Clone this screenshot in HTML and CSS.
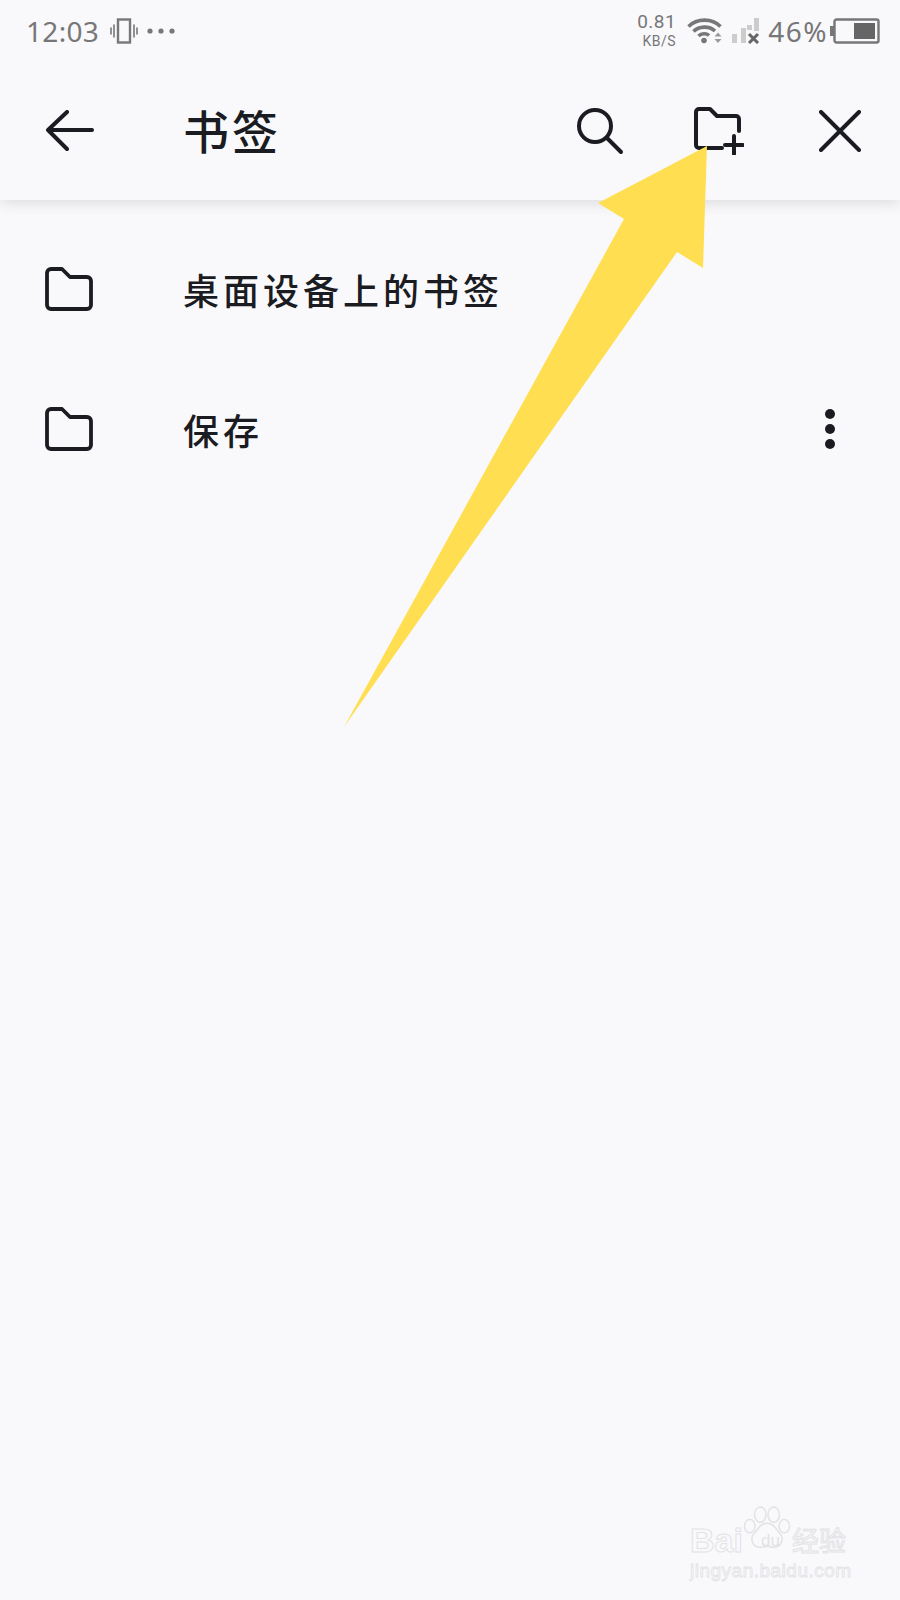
FILE: index.html
```html
<!DOCTYPE html>
<html lang="zh-CN">
<head>
    <meta charset="UTF-8">
    <meta name="viewport" content="width=device-width, initial-scale=1.0">
    <title>书签</title>
    <link rel="stylesheet" href="styles.css">
</head>
<body>
    <div class="screen">
        <div class="status-bar">
            <span class="clock">12:03</span>
            <svg class="vibrate-icon" width="28" height="26" viewBox="0 0 28 26" fill="none" stroke="#777" stroke-linecap="round">
                <rect x="8" y="1.5" width="12" height="23" stroke-width="2.4"/>
                <path d="M4 7v12M1 10v6M24 7v12M27 10v6" stroke-width="1.6"/>
            </svg>
            <svg class="more-icon" width="28" height="6" viewBox="0 0 28 6" fill="#777">
                <circle cx="3" cy="3" r="2.6"/><circle cx="14" cy="3" r="2.6"/><circle cx="25" cy="3" r="2.6"/>
            </svg>
            <div class="status-right">
                <div class="speed">
                    <span class="speed-value">0.81</span>
                    <span class="speed-unit">KB/S</span>
                </div>
                <svg class="wifi-icon" width="36" height="26" viewBox="0 0 36 26" fill="none" stroke="#777" stroke-width="3.6">
                    <path d="M1.5 8.5C10 0 25 0 33.500 8.500"/>
                    <path d="M6.500 13.500C12 8 22 7.500 28 13"/>
                    <path d="M11.500 18C14.500 15 19.500 15 22 17.500"/>
                    <circle cx="17" cy="22.500" r="2.800" fill="#777" stroke="none"/>
                    <path d="M31 14.500l3.500 4h-7zM31 25l3.500-4h-7z" fill="#999" stroke="none"/>
                </svg>
                <svg class="signal-icon" width="28" height="26" viewBox="0 0 28 26">
                    <rect x="0" y="16" width="5" height="9" fill="#ccc"/>
                    <rect x="9" y="10" width="5" height="15" fill="#ccc"/>
                    <rect x="15" y="7" width="5" height="5" fill="#ccc"/>
                    <rect x="22" y="0" width="5" height="13" fill="#ccc"/>
                    <path d="M17 16l9 9M26 16l-9 9" stroke="#666" stroke-width="3"/>
                </svg>
                <span class="battery-text">46%</span>
                <svg class="battery-icon" width="50" height="26" viewBox="0 0 50 26">
                    <rect x="0" y="8" width="4" height="10" fill="#777"/>
                    <rect x="4.500" y="1.500" width="44" height="23" rx="2" fill="none" stroke="#777" stroke-width="2.400"/>
                    <rect x="24" y="5" width="21" height="16" fill="#666"/>
                </svg>
            </div>
        </div>

        <div class="toolbar">
            <svg class="back-icon" width="48" height="42" viewBox="0 0 48 42" fill="none" stroke="#1b1b22" stroke-width="4" stroke-linecap="round" stroke-linejoin="round">
                <path d="M2 20h44M21 2L2 20l19 19"/>
            </svg>
            <h1 class="toolbar-title">书签</h1>
            <div class="toolbar-actions">
                <svg class="search-icon" width="48" height="50" viewBox="0 0 48 50" fill="none" stroke="#1b1b22" stroke-width="4" stroke-linecap="round">
                    <circle cx="19" cy="20" r="16"/>
                    <path d="M31 32l14 14"/>
                </svg>
                <svg class="add-folder-icon" width="50" height="48" viewBox="0 0 50 48" fill="none" stroke="#1b1b22" stroke-width="4" stroke-linecap="round" stroke-linejoin="round">
                    <path d="M28 41H5a3 3 0 0 1-3-3V5a3 3 0 0 1 3-3h11l7 7h19a3 3 0 0 1 3 3v12"/>
                    <path d="M31 38h18M40 29v18"/>
                </svg>
                <svg width="42" height="42" viewBox="0 0 42 42" fill="none" stroke="#1b1b22" stroke-width="4" stroke-linecap="round">
                    <path d="M2 2l38 38M40 2L2 40"/>
                </svg>
            </div>
        </div>

        <ul class="folder-list">
            <li class="folder-row">
                <svg class="folder-icon" width="48" height="44" viewBox="0 0 48 44" fill="none" stroke="#1b1b22" stroke-width="3.800" stroke-linejoin="round">
                    <path d="M6 2h11l8 8h17a4 4 0 0 1 4 4v24a4 4 0 0 1-4 4H6a4 4 0 0 1-4-4V6a4 4 0 0 1 4-4z"/>
                </svg>
                <span class="folder-name">桌面设备上的书签</span>
            </li>
            <li class="folder-row">
                <svg class="folder-icon" width="48" height="44" viewBox="0 0 48 44" fill="none" stroke="#1b1b22" stroke-width="3.800" stroke-linejoin="round">
                    <path d="M6 2h11l8 8h17a4 4 0 0 1 4 4v24a4 4 0 0 1-4 4H6a4 4 0 0 1-4-4V6a4 4 0 0 1 4-4z"/>
                </svg>
                <span class="folder-name">保存</span>
                <div class="row-menu">
                    <span class="menu-dot"></span>
                    <span class="menu-dot"></span>
                    <span class="menu-dot"></span>
                </div>
            </li>
        </ul>

        <!-- yellow arrow drawn over the screenshot -->
        <svg class="pointer-arrow" width="900" height="800" viewBox="0 0 900 800">
            <polygon points="707,146 703,268 677,252 344,727 624,219 598,203" fill="#ffdf51"/>
        </svg>

        <div class="watermark">
            <div class="watermark-logo">
                <span class="watermark-word">Bai</span>
                <svg class="watermark-paw" width="48" height="52" viewBox="0 0 50 50" fill="#f9f9fc" stroke="#e2e2e4" stroke-width="1.500">
                    <ellipse cx="18" cy="10" rx="6" ry="8"/>
                    <ellipse cx="32" cy="10" rx="6" ry="8"/>
                    <ellipse cx="7" cy="22" rx="5.500" ry="7"/>
                    <ellipse cx="43" cy="22" rx="5.500" ry="7"/>
                    <path d="M25 19c7 0 9 6 13 10 5 5 3 15-6 15-3 0-5-1-7-1s-4 1-7 1c-9 0-11-10-6-15 4-4 6-10 13-10z"/>
                </svg>
                <span class="watermark-du">du</span>
                <span class="watermark-cn">经验</span>
            </div>
            <div class="watermark-url">jingyan.baidu.com</div>
        </div>
    </div>
</body>
</html>
```

FILE: styles.css
```css
* {
    box-sizing: border-box;
}

body {
    margin: 0;
    background-color: #f9f9fc;
    font-family: "Noto Sans CJK SC", "Noto Sans", sans-serif;
    color: #1b1b22;
}

.screen {
    position: relative;
    width: 900px;
    height: 1600px;
    overflow: hidden;
}

.status-bar {
    display: flex;
    align-items: center;
    height: 62px;
    padding-left: 26px;
    padding-right: 20px;
    color: #777;
    font-family: "Noto Sans", sans-serif;
}

.clock {
    font-size: 28px;
    letter-spacing: 0.300px;
}

.vibrate-icon {
    margin-left: 11px;
}

.more-icon {
    margin-left: 9px;
}

.status-right {
    display: flex;
    align-items: center;
    margin-left: auto;
}

.speed {
    display: flex;
    flex-direction: column;
    align-items: flex-end;
    font-family: Roboto, sans-serif;
}

.speed-value {
    font-size: 19px;
    line-height: 20px;
    letter-spacing: 0.500px;
}

.speed-unit {
    font-size: 14px;
    line-height: 19px;
    letter-spacing: 0.500px;
}

.wifi-icon {
    margin-left: 11px;
}

.signal-icon {
    margin-left: 9px;
}

.battery-text {
    margin-left: 8px;
    font-size: 28px;
    letter-spacing: 1.500px;
}

.battery-icon {
    margin-left: 2px;
}

.toolbar {
    position: relative;
    display: flex;
    align-items: center;
    height: 138px;
    padding-left: 46px;
    padding-right: 39px;
    box-shadow: 0 3px 14px rgba(0, 0, 0, 0.12);
    clip-path: inset(0 0 -30px 0); /* shadow below the bar only */
}

.toolbar-title {
    margin: -5px 0 0 89px;
    font-size: 46px;
    font-weight: 500;
    letter-spacing: 3px;
}

.toolbar-actions {
    display: flex;
    align-items: center;
    margin-left: auto;
}

.add-folder-icon {
    margin-left: 70px;
    margin-right: 75px;
}

.folder-list {
    margin: 0;
    padding: 19px 0 0;
    list-style: none;
}

.folder-row {
    display: flex;
    align-items: center;
    height: 140px;
    padding-left: 45px;
    padding-right: 65px;
}

.folder-name {
    margin-left: 90px;
    font-size: 36px;
    font-weight: 500;
    letter-spacing: 4px;
}

.row-menu {
    display: flex;
    flex-direction: column;
    gap: 5px;
    margin-left: auto;
}

.menu-dot {
    width: 10px;
    height: 10px;
    border-radius: 50%;
    background-color: #1b1b22;
}

.pointer-arrow {
    position: absolute;
    left: 0;
    top: 0;
}

.watermark {
    position: absolute;
    left: 690px;
    top: 1503px;
    color: #e2e2e4;
}

.watermark-logo {
    position: relative;
    display: flex;
    align-items: flex-end;
    height: 52px;
}

.watermark-word {
    margin-bottom: -3px;
    font-family: "Liberation Sans", sans-serif;
    font-size: 34px;
    font-weight: bold;
    line-height: 36px;
    color: transparent;
    -webkit-text-stroke: 1px #e2e2e4;
}

.watermark-du {
    position: absolute;
    left: 71px;
    top: 29px;
    font-family: "Liberation Sans", sans-serif;
    font-size: 17px;
    line-height: 18px;
    color: #e2e2e4;
}

.watermark-cn {
    margin-bottom: -3px;
    margin-left: 1px;
    font-size: 27px;
    line-height: 36px;
    color: transparent;
    -webkit-text-stroke: 1px #e2e2e4;
}

.watermark-url {
    margin-top: 5px;
    font-family: "Liberation Sans", sans-serif;
    font-size: 19px;
    line-height: 22px;
    letter-spacing: 0.500px;
    color: transparent;
    -webkit-text-stroke: 0.800px #e2e2e4;
}
```
